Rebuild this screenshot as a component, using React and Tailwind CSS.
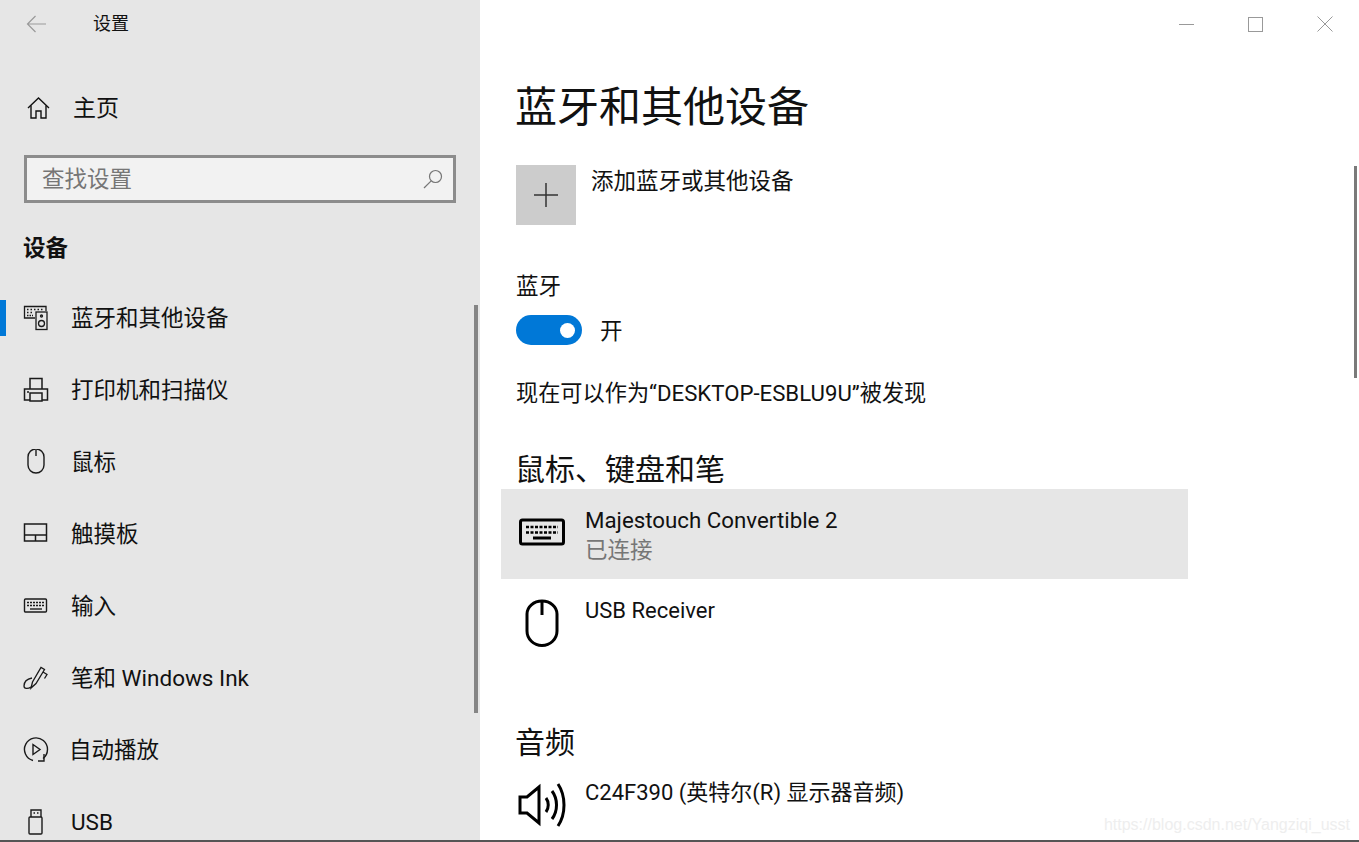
const DevicesIcon = () => (
  <svg width="26" height="26" viewBox="0 0 26 26" fill="none" stroke="#1a1a1a" strokeWidth="1.300">
    <path d="M12 13H1.500V1.500H23V6" />
    <rect x="13" y="7" width="11" height="17.500" />
    <circle cx="18.500" cy="18.500" r="3" />
    <circle cx="18.500" cy="11" r="1" />
    <path d="M4 4.500h2M7.500 4.500h2M11 4.500h2M14.500 4.500h2M18 4.500h2M4 7.500h2M7.500 7.500h2M4 10.500h6" strokeDasharray="1.500 1" />
  </svg>
)

const PrinterIcon = () => (
  <svg width="26" height="26" viewBox="0 0 26 26" fill="none" stroke="#1a1a1a" strokeWidth="1.500">
    <path d="M7 12V1.500h12V12" />
    <path d="M7 23H1.500V12h23v11H19" />
    <rect x="7" y="16" width="12" height="8" />
    <path d="M4 15h2" />
  </svg>
)

const MouseIcon = () => (
  <svg width="26" height="26" viewBox="0 0 26 26" fill="none" stroke="#1a1a1a" strokeWidth="1.400">
    <path d="M5 9a8 8 0 0 1 16 0v8a8 8 0 0 1-16 0z" transform="translate(0 -1)" />
    <path d="M13 1v6" />
  </svg>
)

const TouchpadIcon = () => (
  <svg width="26" height="26" viewBox="0 0 26 26" fill="none" stroke="#1a1a1a" strokeWidth="1.500">
    <rect x="1.500" y="3" width="22" height="17" />
    <path d="M1.500 14h22M12.500 14v6" />
  </svg>
)

const KeyboardIcon = () => (
  <svg width="26" height="26" viewBox="0 0 26 26" fill="none" stroke="#1a1a1a" strokeWidth="1.400">
    <rect x="1.500" y="6" width="22" height="13" rx="1" />
    <path d="M4 9.500h18M4 12.500h18" strokeDasharray="2 1" />
    <path d="M7 16h12" />
  </svg>
)

const PenIcon = () => (
  <svg width="26" height="26" viewBox="0 0 26 26" fill="none" stroke="#1a1a1a" strokeWidth="1.300">
    <path d="M8 23l1.500-6L18 2.500l3.500 2L13 18.500z" />
    <path d="M20 7l4 2.500-2.500 4" />
    <path d="M9 13C4 14 1 17 1 21c0 3 4 3 7 1" />
  </svg>
)

const AutoplayIcon = () => (
  <svg width="26" height="26" viewBox="0 0 26 26" fill="none" stroke="#1a1a1a" strokeWidth="1.400">
    <path d="M20 21.500a11.500 11.500 0 1 0-10 2" />
    <path d="M10 7.500l7 5-7 5z" />
    <path d="M21 17v7h-6" />
  </svg>
)

const UsbIcon = () => (
  <svg width="26" height="26" viewBox="0 0 26 26" fill="none" stroke="#1a1a1a" strokeWidth="1.400">
    <path d="M8 8V1h10v7" />
    <rect x="6" y="8" width="13" height="17" rx="1" />
    <path d="M10.500 4h1.500M14 4h1.500" />
  </svg>
)

const navItems = [
  { label: '蓝牙和其他设备', icon: <DevicesIcon />, active: true },
  { label: '打印机和扫描仪', icon: <PrinterIcon /> },
  { label: '鼠标', icon: <MouseIcon /> },
  { label: '触摸板', icon: <TouchpadIcon /> },
  { label: '输入', icon: <KeyboardIcon /> },
  { label: '笔和 Windows Ink', icon: <PenIcon /> },
  { label: '自动播放', icon: <AutoplayIcon />, textClass: 'ml-[20px]' },
  { label: 'USB', icon: <UsbIcon /> },
]

const App = () => {
  return (
    <div className="relative flex h-[842px] w-[1359px] flex-col overflow-hidden bg-white font-['Roboto','Noto_Sans_CJK_SC',sans-serif] text-[#111]">
      <div className="flex min-h-0 flex-1">
        <aside className="relative w-[480px] shrink-0 overflow-hidden bg-[#e6e6e6]">
          <div className="flex h-[48px] items-center">
            <svg className="ml-[26px]" width="21" height="18" viewBox="0 0 21 18" fill="none" stroke="#9a9a9a" strokeWidth="1.200">
              <path d="M20 9H1.500M9.500 1L1.500 9l8 8" />
            </svg>
            <span className="ml-[46px] text-[18px] leading-none">设置</span>
          </div>

          <div className="mt-[24px] flex h-[72px] items-center pl-[27px]">
            <svg width="23" height="22" viewBox="0 0 23 22" fill="none" stroke="#111" strokeWidth="1.400">
              <path d="M1 11L11.500 1 22 11" />
              <path d="M4 8.500V21h5v-7h5v7h5V8.500" />
            </svg>
            <span className="ml-[23px] text-[23px] leading-none">主页</span>
          </div>

          <div className="mx-[24px] mt-[11px] flex h-[48px] items-center justify-between border-[3px] border-[#8c8c8c] bg-[#f2f2f2] pl-[15px] pr-[10px]">
            <span className="text-[22.500px] leading-none text-[#767676]">查找设置</span>
            <svg width="20" height="20" viewBox="0 0 20 20" fill="none" stroke="#767676" strokeWidth="1.200">
              <circle cx="12.500" cy="7.500" r="6" />
              <path d="M8.200 11.800L1 19" />
            </svg>
          </div>

          <h2 className="mt-[28px] pl-[23px] text-[22.500px] font-bold leading-[34px]">设备</h2>

          <nav className="mt-[17px]">
            {navItems.map((item) => (
              <div key={item.label} className="relative flex h-[72px] items-center pl-[23px]">
                {item.active && <span className="absolute left-0 top-[18px] h-[36px] w-[6px] bg-[#0078d7]" />}
                {item.icon}
                <span className={`text-[22.500px] leading-none ${item.textClass || 'ml-[22px]'}`}>{item.label}</span>
              </div>
            ))}
          </nav>

          <div className="absolute left-[474px] top-[305px] h-[408px] w-[4px] bg-[#858585]" />
        </aside>

        <main className="relative min-w-0 flex-1 overflow-hidden">
          <div className="flex h-[48px] items-center justify-end pr-[26px]">
            <span className="h-px w-[15px] bg-[#999]" />
            <span className="ml-[54px] h-[15px] w-[15px] border border-[#999]" />
            <svg className="ml-[54px]" width="16" height="16" viewBox="0 0 16 16" stroke="#999" strokeWidth="1">
              <path d="M0.500 0.500l15 15M15.500 0.500l-15 15" />
            </svg>
          </div>

          <div className="pl-[36px]">
            <h1 className="-ml-px mt-[35px] text-[42px] font-normal leading-[50px]">蓝牙和其他设备</h1>

            <div className="mt-[32px] flex items-start">
              <div className="flex h-[60px] w-[60px] items-center justify-center bg-[#cccccc]">
                <svg width="24" height="24" viewBox="0 0 24 24" stroke="#333" strokeWidth="1.500">
                  <path d="M12 0v24M0 12h24" />
                </svg>
              </div>
              <span className="ml-[15px] mt-[1px] text-[22.500px] leading-[30px]">添加蓝牙或其他设备</span>
            </div>

            <div className="mt-[46px] text-[22.500px] leading-[30px]">蓝牙</div>
            <div className="mt-[14px] flex items-center">
              <span className="flex h-[30px] w-[66px] items-center justify-end rounded-full bg-[#0078d7] pr-[7px]">
                <span className="h-[15px] w-[15px] rounded-full bg-white" />
              </span>
              <span className="ml-[18px] mt-[2px] text-[22.500px] leading-none">开</span>
            </div>

            <div className="mt-[33px] text-[22.200px] leading-[30px]">现在可以作为“DESKTOP-ESBLU9U”被发现</div>

            <h3 className="-ml-px mt-[43px] text-[30px] font-normal leading-[38px]">鼠标、键盘和笔</h3>
          </div>

          <div className="ml-[21px] flex h-[90px] w-[687px] bg-[#e6e6e6]">
            <svg className="ml-[18px] mt-[28px]" width="46" height="30" viewBox="0 0 46 30" fill="none" stroke="#000" strokeWidth="3">
              <rect x="1.500" y="3" width="43" height="24" rx="2" />
              <path d="M7 10h32M7 15.500h32" strokeDasharray="3 1.500" strokeWidth="2.500" />
              <path d="M14 21h18" />
            </svg>
            <div className="ml-[20px] pt-[16px]">
              <div className="text-[22.300px] leading-[30px]">Majestouch Convertible 2</div>
              <div className="text-[22.500px] leading-[30px] text-[#767676]">已连接</div>
            </div>
          </div>

          <div className="ml-[21px] flex h-[144px] w-[687px]">
            <svg className="ml-[24px] mt-[20px]" width="34" height="48" viewBox="0 0 34 48" fill="none" stroke="#000" strokeWidth="3">
              <path d="M2 15a15 13 0 0 1 30 0v17a15 14.500 0 0 1-30 0z" />
              <path d="M17 2v14" />
            </svg>
            <div className="ml-[26px] pt-[17px] text-[22px] leading-[30px]">USB Receiver</div>
          </div>

          <h3 className="-ml-px pl-[36px] text-[30px] font-normal leading-[40px]">音频</h3>

          <div className="ml-[37px] mt-[14px] flex">
            <svg className="mt-[5px]" width="50" height="46" viewBox="0 0 50 46" fill="none" stroke="#000" strokeWidth="3">
              <path d="M3 15h7L22 5v36L10 31H3z" />
              <path d="M29 16c3 4 3 10 0 14M35 9c6 8 6 20 0 28M41 2c8 12 8 30 0 42" />
            </svg>
            <div className="ml-[18px] pt-px text-[22px] leading-[30px]">C24F390 (英特尔(R) 显示器音频)</div>
          </div>

          <div className="absolute left-[874px] top-[166px] h-[212px] w-[3px] bg-[#7a7a7a]" />
          <div className="absolute bottom-[7px] right-[9px] font-['Liberation_Sans',sans-serif] text-[16px] leading-none text-[#eeeeee]">https://blog.csdn.net/Yangziqi_usst</div>
        </main>
      </div>
      <div className="h-[2px] shrink-0 bg-[#555]" />
    </div>
  )
}

export default App
